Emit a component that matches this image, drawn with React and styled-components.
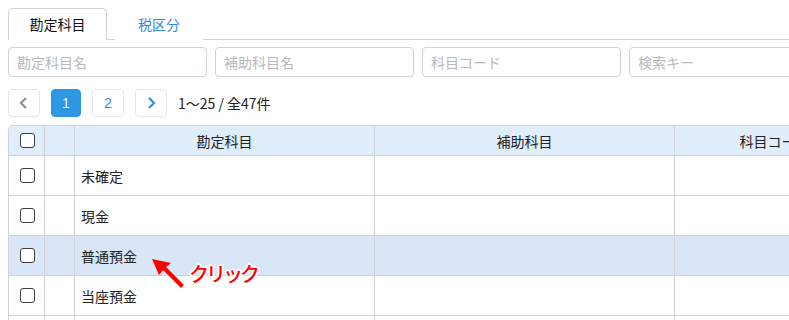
import React from "react";
import styled, { createGlobalStyle } from "styled-components";

const GlobalStyle = createGlobalStyle`
  html, body {
    margin: 0;
    padding: 0;
    background: #ffffff;
    overflow: hidden;
  }
  body {
    font-family: "Noto Sans CJK JP", "Noto Sans", sans-serif;
    font-size: 14px;
    color: #222;
  }
`;

const Page = styled.div`
  position: relative;
  width: 789px;
  height: 320px;
  padding: 8px 0 0 8px;
  box-sizing: border-box;
  overflow: hidden;
`;

const TabBar = styled.div`
  display: flex;
  height: 31px;
  border-bottom: 1px solid #cfd3d9;
`;

const Tab = styled.div`
  width: ${(p) => (p.$active ? "97px" : "86px")};
  display: flex;
  align-items: center;
  justify-content: center;
  font-size: 14px;
  color: ${(p) => (p.$active ? "#111" : "#2b8de0")};
  background: #fff;
  border: 1px solid ${(p) => (p.$active ? "#cfd3d9" : "transparent")};
  border-bottom: none;
  border-radius: 5px 5px 0 0;
  margin-bottom: -1px;
  margin-right: 8px;
  padding-bottom: 1px;
`;

const SearchRow = styled.div`
  display: flex;
  gap: 8px;
  margin-top: 7px;
`;

const SearchInput = styled.input`
  flex: 0 0 199px;
  height: 30px;
  box-sizing: border-box;
  border: 1px solid #d0d4da;
  border-radius: 4px;
  padding: 0 8px;
  font-family: inherit;
  font-size: 14px;
  outline: none;
  &::placeholder {
    color: #b6b9be;
  }
`;

const Pager = styled.div`
  display: flex;
  align-items: center;
  gap: 11px;
  margin-top: 12px;
  height: 28px;
`;

const PageButton = styled.div`
  width: ${(p) => (p.$wide ? "32px" : "30px")};
  height: 28px;
  box-sizing: border-box;
  display: flex;
  align-items: center;
  justify-content: center;
  border-radius: 4px;
  border: 1px solid ${(p) => (p.$current ? "#2d97e4" : "#e3e6ea")};
  background: ${(p) => (p.$current ? "#2d97e4" : "#fff")};
  color: ${(p) => (p.$current ? "#fff" : "#2d8fe0")};
  font-size: 14px;
  font-family: "Liberation Sans", sans-serif;
`;

const PageInfo = styled.span`
  font-size: 14px;
  color: #222;
`;

const Table = styled.div`
  margin-top: 8px;
  width: 900px;
  border-top: 1px solid #cfd3d9;
  border-left: 1px solid #cfd3d9;
  border-top-left-radius: 5px;
  overflow: hidden;
`;

const Row = styled.div`
  display: grid;
  grid-template-columns: 36px 30px 300px 300px 200px;
  height: ${(p) => (p.$header ? "30px" : "40px")};
  background: ${(p) => (p.$header ? "#e0eefc" : p.$selected ? "#d9e6f5" : "#fff")};
  border-bottom: 1px solid #cfd3d9;
  box-sizing: border-box;
`;

const Cell = styled.div`
  display: flex;
  align-items: center;
  justify-content: ${(p) => (p.$center ? "center" : "flex-start")};
  padding: ${(p) => (p.$center ? "0" : "0 6px")};
  border-right: 1px solid #cfd3d9;
  font-size: 14px;
  color: #222;
  white-space: nowrap;
`;

const Checkbox = styled.span`
  width: 15px;
  height: 15px;
  box-sizing: border-box;
  border: 1px solid #3a3f45;
  border-radius: 3px;
  background: #fff;
  margin-left: 1px;
`;

const Annotation = styled.div`
  position: absolute;
  left: 150px;
  top: 255px;
  display: flex;
  align-items: flex-start;
  pointer-events: none;
`;

const ClickLabel = styled.span`
  font-size: 20px;
  font-weight: 500;
  line-height: 1;
  color: #ff0000;
  margin-top: 9px;
  margin-left: 3px;
  -webkit-text-stroke: 3px #ffffff;
  paint-order: stroke fill;
  letter-spacing: -3px;
`;

const Chevron = ({ dir, color }) => (
  <svg width="12" height="14" viewBox="0 0 12 14">
    <path
      d={dir === "left" ? "M8 2 L3 7 L8 12" : "M4 2 L9 7 L4 12"}
      fill="none"
      stroke={color}
      strokeWidth="2.2"
    />
  </svg>
);

const rows = ["未確定", "現金", "普通預金", "当座預金", ""];

export default function App() {
  return (
    <>
      <GlobalStyle />
      <Page>
        <TabBar>
          <Tab $active>勘定科目</Tab>
          <Tab>税区分</Tab>
        </TabBar>
        <SearchRow>
          <SearchInput placeholder="勘定科目名" />
          <SearchInput placeholder="補助科目名" />
          <SearchInput placeholder="科目コード" />
          <SearchInput placeholder="検索キー" />
        </SearchRow>
        <Pager>
          <PageButton $wide>
            <Chevron dir="left" color="#8c9096" />
          </PageButton>
          <PageButton $current>1</PageButton>
          <PageButton $wide>2</PageButton>
          <PageButton $wide>
            <Chevron dir="right" color="#2d8fe0" />
          </PageButton>
          <PageInfo>1〜25 / 全47件</PageInfo>
        </Pager>
        <Table>
          <Row $header>
            <Cell $center>
              <Checkbox />
            </Cell>
            <Cell />
            <Cell $center>勘定科目</Cell>
            <Cell $center>補助科目</Cell>
            <Cell $center>科目コード</Cell>
          </Row>
          {rows.map((name, i) => (
            <Row key={i} $selected={name === "普通預金"}>
              <Cell $center>
                <Checkbox />
              </Cell>
              <Cell />
              <Cell>{name}</Cell>
              <Cell />
              <Cell />
            </Row>
          ))}
        </Table>
        <Annotation>
          <svg width="36" height="34" viewBox="0 0 36 34">
            <path d="M2 4 L21 8 L16 12 L34 30 L31 33 L13 15 L9 20 Z" fill="#ff0000" />
          </svg>
          <ClickLabel>クリック</ClickLabel>
        </Annotation>
      </Page>
    </>
  );
}
